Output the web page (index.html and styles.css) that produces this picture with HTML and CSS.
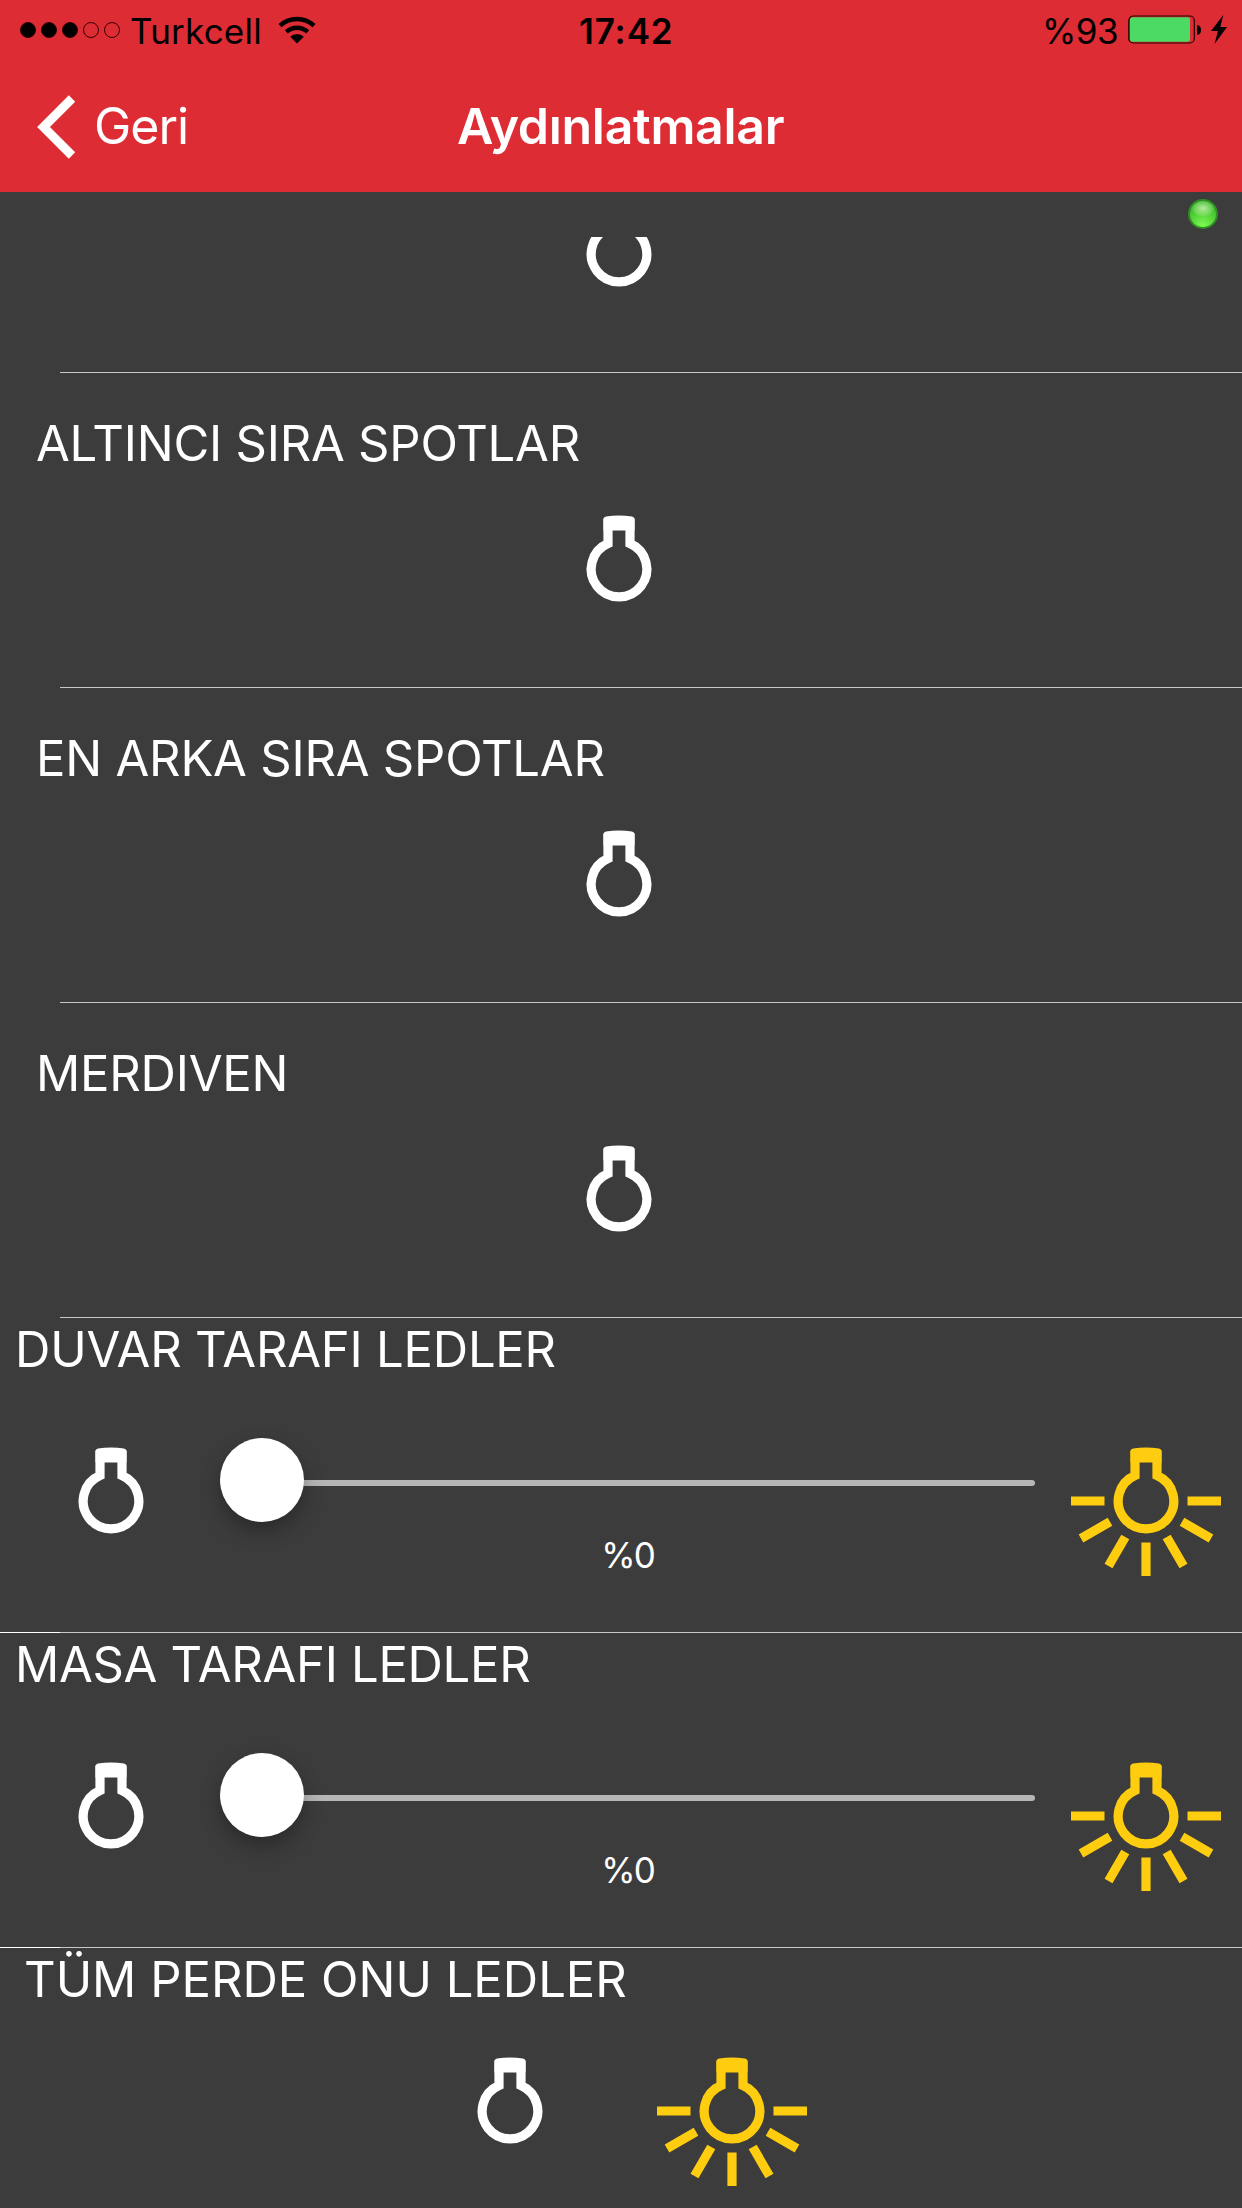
FILE: index.html
```
<!DOCTYPE html>
<html lang="tr">
<head>
<meta charset="utf-8">
<title>Aydınlatmalar</title>
<link rel="stylesheet" href="styles.css">
</head>
<body>
<svg width="0" height="0" class="defs">
    <symbol id="bulb" viewBox="-80 -58 160 140">
        <path d="M-11 -25.5 V-46 H11 V-25.5 A27.8 27.8 0 1 1 -11 -25.5 Z" fill="none" stroke="currentColor" stroke-width="9.2"/>
        <path d="M-15.5 -50 Q-15.5 -52 -13 -52.5 Q0 -54.5 13 -52.5 Q15.5 -52 15.5 -50 V-38.5 H-15.5 Z" fill="currentColor"/>
    </symbol>
    <symbol id="rays" viewBox="-80 -58 160 140">
        <path d="M-41.5 0 H-75 M41.5 0 H75 M0 41.5 V75 M-36 20.7 L-65 37.5 M36 20.7 L65 37.5 M-20.7 36 L-37.5 65 M20.7 36 L37.5 65" fill="none" stroke="currentColor" stroke-width="9.2"/>
    </symbol>
</svg>

<header>
    <div class="status">
        <div class="signal"><i class="on"></i><i class="on"></i><i class="on"></i><i></i><i></i></div>
        <span class="carrier">Turkcell</span>
        <svg class="wifi" width="38" height="28" viewBox="0 0 38 28">
            <path d="M2 9.6 A25 25 0 0 1 36 9.6 M8.3 15.9 A16 16 0 0 1 29.7 15.9" fill="none" stroke="#000" stroke-width="4.4"/>
            <path d="M19 27.5 L12.2 20.7 A10 10 0 0 1 25.8 20.7 Z"/>
        </svg>
        <span class="clock">17:42</span>
        <span class="percent">%93</span>
        <svg class="battery" width="100" height="30" viewBox="0 0 100 30">
            <rect x=".8" y="1" width="65.5" height="27" rx="4.5" fill="none" stroke="#200" stroke-width="1.2"/>
            <rect x="2" y="2.2" width="60" height="24.6" rx="2.5" fill="#4cd964"/>
            <path d="M69 10 Q73 10.5 73 15 Q73 19.5 69 20 Z"/>
            <path d="M95.3 0 L83 16 H90 L86.5 29 L99 12 H92.3 Z"/>
        </svg>
    </div>
    <div class="nav">
        <svg class="back" width="40" height="64" viewBox="0 0 40 64">
            <path d="M36 3.5 L7.5 32 L36 60.5" fill="none" stroke="#fff" stroke-width="9"/>
        </svg>
        <span class="geri">Geri</span>
        <h1>Aydınlatmalar</h1>
    </div>
</header>

<div class="connection"><span class="led"></span></div>

<div class="list">
    <div class="row spot first">
        <svg class="icon"><use href="#bulb"/></svg>
    </div>
    <div class="row spot">
        <h2>ALTINCI SIRA SPOTLAR</h2>
        <svg class="icon"><use href="#bulb"/></svg>
    </div>
    <div class="row spot">
        <h2>EN ARKA SIRA SPOTLAR</h2>
        <svg class="icon"><use href="#bulb"/></svg>
    </div>
    <div class="row spot">
        <h2>MERDIVEN</h2>
        <svg class="icon"><use href="#bulb"/></svg>
    </div>
    <div class="row dimmer full">
        <h2>DUVAR TARAFI LEDLER</h2>
        <div class="controls">
            <svg class="icon"><use href="#bulb"/></svg>
            <div class="slider">
                <div class="track"><span class="thumb"></span></div>
                <span class="value">%0</span>
            </div>
            <svg class="icon lit"><use href="#bulb"/><use href="#rays"/></svg>
        </div>
    </div>
    <div class="row dimmer full">
        <h2 class="tight">MASA TARAFI LEDLER</h2>
        <div class="controls">
            <svg class="icon"><use href="#bulb"/></svg>
            <div class="slider">
                <div class="track"><span class="thumb"></span></div>
                <span class="value">%0</span>
            </div>
            <svg class="icon lit"><use href="#bulb"/><use href="#rays"/></svg>
        </div>
    </div>
    <div class="row group">
        <h2>TÜM PERDE ONU LEDLER</h2>
        <div class="pair">
            <svg class="icon"><use href="#bulb"/></svg>
            <svg class="icon lit"><use href="#bulb"/><use href="#rays"/></svg>
        </div>
    </div>
</div>
</body>
</html>
```
FILE: styles.css
```
* {
    box-sizing: border-box;
}
body {
    margin: 0;
    width: 1242px;
    height: 2208px;
    overflow: hidden;
    display: flex;
    flex-direction: column;
    background-color: #3c3c3c;
    color: #fff;
    font-family: Inter, "Liberation Sans", sans-serif;
}
.defs {
    position: absolute;
}
header {
    height: 192px;
    flex: none;
    background-color: #dd2c33;
}
.status {
    height: 60px;
    display: flex;
    align-items: center;
    padding-left: 20px;
    color: #000;
    font-size: 35px;
    line-height: 60px;
    white-space: nowrap;
}
.status span {
    padding-top: 2px;
}
.signal {
    display: flex;
    gap: 5px;
    width: 110px;
}
.signal i {
    width: 16px;
    height: 16px;
    border: 1px solid #300;
    border-radius: 50%;
}
.signal i.on {
    background-color: #000;
}
.carrier {
    width: 148px;
    letter-spacing: .2px;
}
.wifi {
    width: 38px;
    margin-right: 263px;
}
.clock {
    width: 463px;
    font-weight: 600;
    letter-spacing: .9px;
}
.percent {
    width: 86px;
    letter-spacing: -.5px;
}
.nav {
    height: 131px;
    display: flex;
    align-items: center;
    padding-left: 36px;
    line-height: 132px;
    font-size: 50px;
    white-space: nowrap;
}
.back {
    margin-top: 2px;
}
.geri {
    width: 363px;
    margin-left: 18px;
    letter-spacing: -1px;
}
h1 {
    margin: 0;
    font-size: 50px;
    font-weight: 600;
    letter-spacing: -.3px;
}
.connection {
    height: 45px;
    flex: none;
    display: flex;
    justify-content: flex-end;
    padding: 7px 24px 0 0;
}
.led {
    width: 30px;
    height: 30px;
    border-radius: 50%;
    border: 2px solid #2f8f24;
    background: radial-gradient(ellipse 11px 8px at 50% 28%, #b4ec9e, rgba(180, 236, 158, .2) 95%, transparent), radial-gradient(circle at 50% 95%, #7dfc50, #3cb82c 75%);
}
.list {
    flex: 1;
    overflow: hidden;
    display: flex;
    flex-direction: column;
}
.row {
    height: 315px;
    flex: none;
    background: linear-gradient(#c8c8c8, #c8c8c8) 60px 100% / 1182px 1px no-repeat;
}
.row.full {
    background: linear-gradient(90deg, #fff 60px, #c8c8c8 60px) 0 100% / 100% 1px no-repeat;
}
/* last plain row before the dimmers keeps the inset line */
h2 {
    margin: 0;
    font-size: 49px;
    font-weight: 400;
    line-height: 60px;
    letter-spacing: -.22px;
    white-space: nowrap;
}
h2.tight {
    letter-spacing: -.3px;
}
.icon {
    display: block;
    width: 160px;
    height: 140px;
    color: #fff;
}
.icon.lit {
    color: #fecd0f;
}
.spot {
    padding: 41px 0 0 36px;
}
.spot .icon {
    margin: 36.5px 0 0 503px;
}
/* first row is scrolled partly under the bar */
.first {
    height: 136px;
    padding-top: 0;
}
.first .icon {
    margin-top: -41.5px;
}
.dimmer,
.group {
    padding: 2px 0 0 15px;
}
.controls {
    display: grid;
    grid-template-columns: 160px 815px 160px;
    column-gap: 30px;
    margin: 58px 0 0 16px;
}
.controls .icon {
    margin-top: 4.7px;
}
.slider {
    margin-left: -1px;
    width: 815px;
    display: flex;
    flex-direction: column;
    align-items: center;
}
.track {
    width: 100%;
    height: 6px;
    margin-top: 42px;
    border-radius: 3px;
    background-color: #b6b6b6;
    display: flex;
    align-items: center;
}
.thumb {
    width: 84px;
    height: 84px;
    flex: none;
    margin-top: -6px;
    border-radius: 50%;
    background-color: #fff;
    box-shadow: 0 9px 20px rgba(0, 0, 0, .3);
}
.value {
    margin-top: 47px;
    font-size: 35px;
    line-height: 44px;
    letter-spacing: -2px;
}
.group {
    padding-left: 24px;
    background: none;
}
.group h2 {
    letter-spacing: 0;
}
.pair {
    display: flex;
    gap: 62px;
    margin: 42.5px 0 0 406px;
}
```
